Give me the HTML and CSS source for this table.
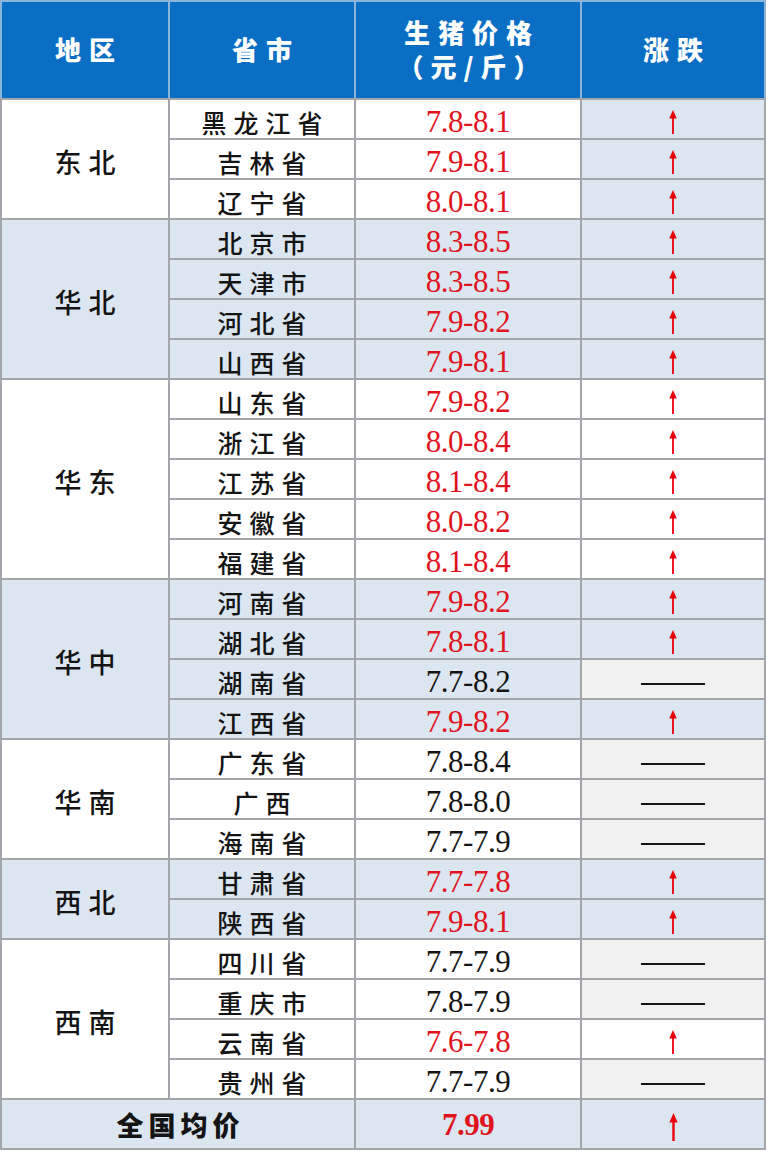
FILE: index.html
```html
<!DOCTYPE html>
<html lang="zh">
<head>
<meta charset="utf-8">
<link rel="stylesheet" href="styles.css">
<title>生猪价格</title>
</head>
<body>
<svg width="0" height="0" class="defs">
  <defs>
    <symbol id="up" viewBox="0 0 10 24"><polygon points="1.2,8.5 5,0 8.8,8.5" fill="#e8000b"/><rect x="4.1" y="6" width="1.8" height="18" fill="#e8000b"/></symbol>
    <symbol id="upb" viewBox="0 0 10 28"><polygon points="0.8,9.5 5,0 9.2,9.5" fill="#e8000b"/><rect x="3.8" y="7" width="2.4" height="21" fill="#e8000b"/></symbol>
  </defs>
</svg>
<table class="tbl">
  <colgroup>
    <col class="c1"><col class="c2"><col class="c3"><col class="c4">
  </colgroup>
  <thead>
    <tr class="head">
      <th>地区</th>
      <th>省市</th>
      <th><span class="l1">生猪价格</span><span class="l2">（元/斤）</span></th>
      <th>涨跌</th>
    </tr>
  </thead>
  <tbody>
    <tr>
      <td class="reg" rowspan="3">东北</td>
      <td class="prov">黑龙江省</td><td class="num red">7.8-8.1</td><td class="trend blue"><svg class="arr"><use href="#up"/></svg></td>
    </tr>
    <tr><td class="prov">吉林省</td><td class="num red">7.9-8.1</td><td class="trend blue"><svg class="arr"><use href="#up"/></svg></td></tr>
    <tr><td class="prov">辽宁省</td><td class="num red">8.0-8.1</td><td class="trend blue"><svg class="arr"><use href="#up"/></svg></td></tr>

    <tr class="blue">
      <td class="reg" rowspan="4">华北</td>
      <td class="prov">北京市</td><td class="num red">8.3-8.5</td><td class="trend"><svg class="arr"><use href="#up"/></svg></td>
    </tr>
    <tr class="blue"><td class="prov">天津市</td><td class="num red">8.3-8.5</td><td class="trend"><svg class="arr"><use href="#up"/></svg></td></tr>
    <tr class="blue"><td class="prov">河北省</td><td class="num red">7.9-8.2</td><td class="trend"><svg class="arr"><use href="#up"/></svg></td></tr>
    <tr class="blue"><td class="prov">山西省</td><td class="num red">7.9-8.1</td><td class="trend"><svg class="arr"><use href="#up"/></svg></td></tr>

    <tr>
      <td class="reg" rowspan="5">华东</td>
      <td class="prov">山东省</td><td class="num red">7.9-8.2</td><td class="trend"><svg class="arr"><use href="#up"/></svg></td>
    </tr>
    <tr><td class="prov">浙江省</td><td class="num red">8.0-8.4</td><td class="trend"><svg class="arr"><use href="#up"/></svg></td></tr>
    <tr><td class="prov">江苏省</td><td class="num red">8.1-8.4</td><td class="trend"><svg class="arr"><use href="#up"/></svg></td></tr>
    <tr><td class="prov">安徽省</td><td class="num red">8.0-8.2</td><td class="trend"><svg class="arr"><use href="#up"/></svg></td></tr>
    <tr><td class="prov">福建省</td><td class="num red">8.1-8.4</td><td class="trend"><svg class="arr"><use href="#up"/></svg></td></tr>

    <tr class="blue">
      <td class="reg" rowspan="4">华中</td>
      <td class="prov">河南省</td><td class="num red">7.9-8.2</td><td class="trend"><svg class="arr"><use href="#up"/></svg></td>
    </tr>
    <tr class="blue"><td class="prov">湖北省</td><td class="num red">7.8-8.1</td><td class="trend"><svg class="arr"><use href="#up"/></svg></td></tr>
    <tr class="blue"><td class="prov">湖南省</td><td class="num">7.7-8.2</td><td class="trend gray"><span class="dash"></span></td></tr>
    <tr class="blue"><td class="prov">江西省</td><td class="num red">7.9-8.2</td><td class="trend"><svg class="arr"><use href="#up"/></svg></td></tr>

    <tr>
      <td class="reg" rowspan="3">华南</td>
      <td class="prov">广东省</td><td class="num">7.8-8.4</td><td class="trend gray"><span class="dash"></span></td>
    </tr>
    <tr><td class="prov">广西</td><td class="num">7.8-8.0</td><td class="trend gray"><span class="dash"></span></td></tr>
    <tr><td class="prov">海南省</td><td class="num">7.7-7.9</td><td class="trend gray"><span class="dash"></span></td></tr>

    <tr class="blue">
      <td class="reg" rowspan="2">西北</td>
      <td class="prov">甘肃省</td><td class="num red">7.7-7.8</td><td class="trend"><svg class="arr"><use href="#up"/></svg></td>
    </tr>
    <tr class="blue"><td class="prov">陕西省</td><td class="num red">7.9-8.1</td><td class="trend"><svg class="arr"><use href="#up"/></svg></td></tr>

    <tr>
      <td class="reg" rowspan="4">西南</td>
      <td class="prov">四川省</td><td class="num">7.7-7.9</td><td class="trend gray"><span class="dash"></span></td>
    </tr>
    <tr><td class="prov">重庆市</td><td class="num">7.8-7.9</td><td class="trend gray"><span class="dash"></span></td></tr>
    <tr><td class="prov">云南省</td><td class="num red">7.6-7.8</td><td class="trend"><svg class="arr"><use href="#up"/></svg></td></tr>
    <tr><td class="prov">贵州省</td><td class="num">7.7-7.9</td><td class="trend gray"><span class="dash"></span></td></tr>

    <tr class="blue total">
      <td class="tot" colspan="2">全国均价</td>
      <td class="num red bold">7.99</td>
      <td class="trend"><svg class="arr big"><use href="#upb"/></svg></td>
    </tr>
  </tbody>
</table>
</body>
</html>
```

FILE: styles.css
```css
html, body {
  margin: 0;
  padding: 0;
  background: #ffffff;
}

.defs {
  position: absolute;
  width: 0;
  height: 0;
}

.tbl {
  border-collapse: collapse;
  table-layout: fixed;
  width: 766px;
  font-family: "Noto Sans CJK SC", "Noto Sans", sans-serif;
  color: #141414;
}

.c1 { width: 168px; }
.c2 { width: 186px; }
.c3 { width: 226px; }
.c4 { width: 184px; }

.tbl th,
.tbl td {
  border: 2px solid #a3a5ab;
  text-align: center;
  vertical-align: middle;
  padding: 5px 0 0 0;
  line-height: 28px;
}

.head {
  height: 98px;
}

.head th {
  background: #0a6fc4;
  color: #ffffff;
  font-weight: 900;
  font-size: 26px;
  letter-spacing: 8px;
  padding: 0 0 2px 8px;
  border-color: #8db3d8 #8db3d8 #a3a5ab #8db3d8;
}

.head .l1,
.head .l2 {
  display: block;
  line-height: 34px;
}

.head .l2 {
  letter-spacing: 7px;
}

tbody tr {
  height: 40px;
}

.blue > td,
td.blue {
  background: #dce6f1;
}

td.gray,
.blue > td.gray {
  background: #f1f1f1;
}

.reg {
  font-size: 27px;
  font-weight: 500;
  letter-spacing: 7px;
  padding-left: 7px !important;
}

.prov {
  font-size: 25px;
  font-weight: 500;
  letter-spacing: 7px;
  padding-left: 7px !important;
}

.num {
  font-family: "Liberation Serif", "Times New Roman", serif;
  font-size: 31px;
  letter-spacing: -0.5px;
}

.red {
  color: #e0141e;
}

.bold {
  font-weight: 700;
  padding-top: 2px !important;
}

.arr {
  display: block;
  margin: 0 auto;
  width: 10px;
  height: 24px;
}

.arr.big {
  width: 11px;
  height: 28px;
}

.dash {
  display: block;
  margin: 4px auto 0;
  width: 64px;
  height: 2px;
  background: #141414;
}

.total {
  height: 50px;
}

.tot {
  font-size: 27px;
  font-weight: 900;
  letter-spacing: 5px;
  padding-left: 5px !important;
  padding-top: 2px !important;
}
```
